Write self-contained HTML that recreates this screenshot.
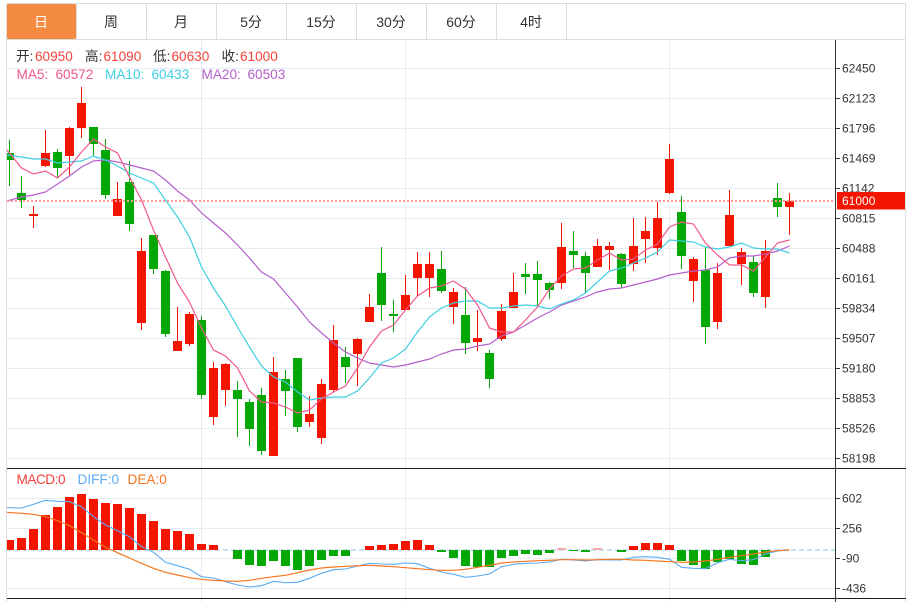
<!DOCTYPE html>
<html>
<head>
<meta charset="utf-8">
<style>
html,body{margin:0;padding:0;background:#fff;width:910px;height:602px;overflow:hidden}
svg{display:block}
text{font-family:"Liberation Sans","Noto Sans CJK SC",sans-serif}
.tab{font-size:14px;fill:#333;text-anchor:middle}
.ax{font-size:12px;fill:#333}
.lg{font-size:13.6px}
</style>
</head>
<body>
<svg width="910" height="602" viewBox="0 0 910 602" xmlns="http://www.w3.org/2000/svg">
<defs><clipPath id="c"><rect x="7" y="40" width="828" height="562"/></clipPath></defs>
<rect width="910" height="602" fill="#fff"/>

<!-- frame & tabs -->
<path d="M6 3.5H906M6.5 3V602M905.5 3V602M7 39.5H905M76.5 4V39M146.5 4V39M216.5 4V39M286.5 4V39M356.5 4V39M426.5 4V39M496.5 4V39M566.5 4V39" stroke="#dcdcdc" fill="none"/>
<rect x="7" y="4" width="69" height="35" rx="1.5" fill="#f48b40"/>
<text class="tab" x="41" y="27" style="fill:#fff">日</text>
<text class="tab" x="111" y="27">周</text>
<text class="tab" x="181" y="27">月</text>
<text class="tab" x="251" y="27">5分</text>
<text class="tab" x="321" y="27">15分</text>
<text class="tab" x="391" y="27">30分</text>
<text class="tab" x="461" y="27">60分</text>
<text class="tab" x="531" y="27">4时</text>

<!-- grid -->
<path d="M7 68.5H835M7 98.5H835M7 128.5H835M7 158.5H835M7 188.5H835M7 218.5H835M7 248.5H835M7 278.5H835M7 308.5H835M7 338.5H835M7 368.5H835M7 398.5H835M7 428.5H835M7 458.5H835M7 498.5H835M7 528.5H835M7 558.5H835M7 588.5H835M201.5 40V602M405.5 40V602M669.5 40V602" stroke="#e4edf3" fill="none"/>

<g clip-path="url(#c)">
<!-- zero line -->
<path d="M7 550H835" stroke="#b4dcec" stroke-width="1.5" stroke-dasharray="5 3" fill="none"/>

<g shape-rendering="crispEdges">
<!-- red candles -->
<path fill="none" stroke="#f41400" d="M33.5 206V228M45.5 130V167M69.5 127V175M81.5 87V138M117.5 182V216M141.5 238V330M177.5 307V351M189.5 312V346M213.5 362V425M225.5 363V406M273.5 357V456M309.5 396V427M321.5 379V444M333.5 325V392M357.5 338V386M369.5 294V322M405.5 275V310M417.5 252V296M429.5 252V297M453.5 288V324M477.5 310V351M501.5 304V341M513.5 273V308M561.5 223V289M597.5 239V267M609.5 242V270M633.5 218V271M645.5 217V263M657.5 202V255M669.5 144V194M693.5 257V302M717.5 263V329M729.5 190V246M741.5 248V285M765.5 240V308M789.5 193V235"/>
<path fill="#f41400" d="M29 214h9v2h-9zM41 153h9v13h-9zM65 128h9v28h-9zM77 103h9v25h-9zM113 199h9v17h-9zM137 251h9v72h-9zM173 341h9v10h-9zM185 314h9v30h-9zM209 368h9v49h-9zM221 364h9v26h-9zM269 372h9v84h-9zM305 414h9v8h-9zM317 384h9v54h-9zM329 340h9v50h-9zM353 339h9v15h-9zM365 307h9v15h-9zM401 295h9v15h-9zM413 264h9v14h-9zM425 264h9v14h-9zM449 292h9v15h-9zM473 338h9v4h-9zM497 311h9v28h-9zM509 292h9v16h-9zM557 247h9v36h-9zM593 246h9v21h-9zM605 246h9v4h-9zM629 246h9v18h-9zM641 231h9v8h-9zM653 218h9v30h-9zM665 159h9v34h-9zM689 259h9v22h-9zM713 273h9v49h-9zM725 215h9v31h-9zM737 252h9v12h-9zM761 251h9v46h-9zM785 201h9v6h-9z"/>
<!-- green candles -->
<path fill="none" stroke="#04a804" d="M9.5 140V186M21.5 176V208M57.5 149V177M93.5 127V156M105.5 139V199M129.5 161V231M153.5 235V274M165.5 270V337M201.5 316V399M237.5 381V437M249.5 399V446M261.5 388V455M285.5 370V416M297.5 358V432M345.5 347V383M381.5 247V321M393.5 300V332M441.5 251V293M465.5 287V354M489.5 350V388M525.5 263V294M537.5 261V307M549.5 282V299M573.5 231V268M585.5 252V293M621.5 253V288M681.5 196V269M705.5 247V344M753.5 256V297M777.5 183V217"/>
<path fill="#04a804" d="M5 153h9v7h-9zM17 193h9v7h-9zM53 152h9v16h-9zM89 127h9v17h-9zM101 150h9v45h-9zM125 182h9v42h-9zM149 235h9v34h-9zM161 271h9v63h-9zM197 320h9v75h-9zM233 390h9v9h-9zM245 402h9v27h-9zM257 395h9v56h-9zM281 379h9v12h-9zM293 358h9v69h-9zM341 357h9v10h-9zM377 273h9v32h-9zM389 314h9v2h-9zM437 269h9v22h-9zM461 315h9v28h-9zM485 353h9v26h-9zM521 274h9v3h-9zM533 274h9v6h-9zM545 283h9v7h-9zM569 251h9v4h-9zM581 256h9v17h-9zM617 254h9v30h-9zM677 212h9v44h-9zM701 270h9v57h-9zM749 262h9v31h-9zM773 198h9v9h-9z"/>

<!-- MACD red bars -->
<path fill="#f41400" d="M5 540h9v10h-9zM17 538h9v12h-9zM29 529h9v21h-9zM41 515h9v35h-9zM53 507h9v43h-9zM65 497h9v53h-9zM77 494h9v56h-9zM89 499h9v51h-9zM101 503h9v47h-9zM113 504h9v46h-9zM125 508h9v42h-9zM137 514h9v36h-9zM149 521h9v29h-9zM161 529h9v21h-9zM173 531h9v19h-9zM185 534h9v16h-9zM197 544h9v6h-9zM209 545h9v5h-9zM365 546h9v4h-9zM377 545h9v5h-9zM389 544h9v6h-9zM401 541h9v9h-9zM413 540h9v10h-9zM425 545h9v5h-9zM629 546h9v4h-9zM641 543h9v7h-9zM653 543h9v7h-9zM665 545h9v5h-9z"/>
<!-- MACD green bars -->
<path fill="#04a804" d="M233 550h9v9h-9zM245 550h9v15h-9zM257 550h9v16h-9zM269 550h9v11h-9zM281 550h9v16h-9zM293 550h9v20h-9zM305 550h9v16h-9zM317 550h9v10h-9zM329 550h9v6h-9zM341 550h9v6h-9zM437 550h9v2h-9zM449 550h9v8h-9zM461 550h9v16h-9zM473 550h9v17h-9zM485 550h9v17h-9zM497 550h9v8h-9zM509 550h9v6h-9zM521 550h9v4h-9zM533 550h9v5h-9zM545 550h9v3h-9zM569 550h9v1h-9zM581 550h9v2h-9zM617 550h9v2h-9zM677 550h9v11h-9zM689 550h9v15h-9zM701 550h9v19h-9zM713 550h9v12h-9zM725 550h9v9h-9zM737 550h9v14h-9zM749 550h9v15h-9zM761 550h9v7h-9z"/>
<path fill="#f8a8a8" d="M557 548h9v2h-9zM593 548h9v2h-9z"/>
</g>

<!-- MA lines -->
<polyline fill="none" stroke="#b45fcb" stroke-width="1.2" points="7,201 21.5,197 33.5,195 45.5,192 57.5,184 69.5,176 81.5,167 93.5,161 105.5,160 117.5,162 129.5,165 141.5,168 153.5,171 165.5,180 177.5,191 189.5,200 201.5,213 213.5,223 225.5,233 237.5,245 249.5,258 261.5,272 273.5,279 285.5,293 297.5,307 309.5,322 321.5,333 333.5,343 345.5,352 357.5,358 369.5,363 381.5,365 393.5,367 405.5,365 417.5,362 429.5,359 441.5,354 453.5,350 465.5,349 477.5,346 489.5,344 501.5,336 513.5,332 525.5,325 537.5,318 549.5,312 561.5,305 573.5,301 585.5,297 597.5,292 609.5,289 621.5,288 633.5,285 645.5,282 657.5,279 669.5,275 681.5,273 693.5,271 705.5,270 717.5,267 729.5,258 741.5,256 753.5,256 765.5,254 777.5,251 789.5,246"/>
<polyline fill="none" stroke="#3fcfe2" stroke-width="1.2" points="7,155 21.5,157 33.5,159 45.5,159 57.5,163 69.5,162 81.5,161 93.5,156 105.5,160 117.5,166 129.5,173 141.5,178 153.5,183 165.5,200 177.5,217 189.5,237 201.5,267 213.5,288 225.5,306 237.5,327 249.5,347 261.5,366 273.5,377 285.5,382 297.5,392 309.5,400 321.5,398 333.5,397 345.5,397 357.5,391 369.5,378 381.5,363 393.5,358 405.5,349 417.5,332 429.5,317 441.5,308 453.5,303 465.5,301 477.5,301 489.5,308 501.5,308 513.5,306 525.5,305 537.5,306 549.5,309 561.5,304 573.5,300 585.5,293 597.5,282 609.5,271 621.5,268 633.5,263 645.5,258 657.5,252 669.5,240 681.5,241 693.5,242 705.5,247 717.5,249 729.5,247 741.5,243 753.5,248 765.5,249 777.5,249 789.5,253"/>
<polyline fill="none" stroke="#f0588c" stroke-width="1.2" points="7,150 21.5,168 33.5,174 45.5,171 57.5,178 69.5,167 81.5,152 93.5,139 105.5,147 117.5,153 129.5,177 141.5,200 153.5,230 165.5,257 177.5,283 189.5,302 201.5,328 213.5,350 225.5,356 237.5,368 249.5,391 261.5,402 273.5,403 285.5,407 297.5,413 309.5,410 321.5,399 333.5,392 345.5,386 357.5,368 369.5,347 381.5,331 393.5,325 405.5,310 417.5,296 429.5,288 441.5,286 453.5,281 465.5,289 477.5,305 489.5,328 501.5,332 513.5,332 525.5,320 537.5,307 549.5,289 561.5,276 573.5,269 585.5,268 597.5,260 609.5,253 621.5,260 633.5,259 645.5,250 657.5,244 669.5,227 681.5,222 693.5,224 705.5,243 717.5,255 729.5,265 741.5,265 753.5,271 765.5,257 777.5,243 789.5,240"/>

<!-- MACD lines -->
<polyline fill="none" stroke="#5cacf2" stroke-width="1.1" points="7,507.7 21.5,508 33.5,504.3 45.5,500.3 57.5,501.3 69.5,501.7 81.5,506.7 93.5,516.7 105.5,525 117.5,530.7 129.5,536.7 141.5,546.7 153.5,552.3 165.5,562.3 177.5,565.7 189.5,569.3 201.5,576.7 213.5,578 225.5,581.7 237.5,585 249.5,587 261.5,585.7 273.5,581.3 285.5,582.7 297.5,582.3 309.5,578.3 321.5,573.3 333.5,569.7 345.5,569 357.5,566 369.5,563.3 381.5,564 393.5,564.3 405.5,563 417.5,563.7 429.5,568.3 441.5,572 453.5,574.3 465.5,577.3 477.5,576 489.5,574 501.5,566.7 513.5,564.3 525.5,563.3 537.5,563 549.5,562 561.5,559.3 573.5,560 585.5,561 597.5,559.7 609.5,560 621.5,560 633.5,557.3 645.5,556.7 657.5,557.3 669.5,559.3 681.5,567.3 693.5,568.3 705.5,568.7 717.5,562.7 729.5,559.3 741.5,560.7 753.5,559.7 765.5,554 777.5,551 789.5,550"/>
<polyline fill="none" stroke="#f7761f" stroke-width="1.2" points="7,512.3 21.5,513.3 33.5,514.3 45.5,516.7 57.5,520.7 69.5,525.7 81.5,532.7 93.5,540 105.5,547.3 117.5,552.7 129.5,558 141.5,563.3 153.5,568.3 165.5,572.3 177.5,575 189.5,577.7 201.5,579.3 213.5,580.3 225.5,581 237.5,581.3 249.5,580.3 261.5,578.3 273.5,576.7 285.5,575.3 297.5,572.7 309.5,570 321.5,568 333.5,567 345.5,566.3 357.5,565.7 369.5,565.3 381.5,566 393.5,566.7 405.5,567.7 417.5,568.7 429.5,569.7 441.5,570.3 453.5,570.3 465.5,569.3 477.5,567.3 489.5,565.3 501.5,563 513.5,562 525.5,561.3 537.5,560.7 549.5,560.3 561.5,559.7 573.5,559.7 585.5,560 597.5,559.7 609.5,559.3 621.5,559.3 633.5,560 645.5,560.3 657.5,561 669.5,561.7 681.5,562.3 693.5,562 705.5,561 717.5,559.3 729.5,557.3 741.5,555.7 753.5,554 765.5,552 777.5,550.7 789.5,550"/>

<!-- current price line -->
<path d="M7 201H835" stroke="#f99" stroke-width="2" stroke-dasharray="2 2" fill="none"/>
</g>

<!-- panel separators & axis -->
<path d="M7 468.5H906M7 598.5H906" stroke="#1c1c1c" fill="none"/>
<path d="M835.5 40V602" stroke="#333" fill="none"/>
<path d="M836 68.5H840M836 98.5H840M836 128.5H840M836 158.5H840M836 188.5H840M836 218.5H840M836 248.5H840M836 278.5H840M836 308.5H840M836 338.5H840M836 368.5H840M836 398.5H840M836 428.5H840M836 458.5H840M836 498.5H840M836 528.5H840M836 558.5H840M836 588.5H840" stroke="#333" fill="none"/>

<!-- axis labels -->
<text class="ax" x="842" y="72.5">62450</text>
<text class="ax" x="842" y="102.5">62123</text>
<text class="ax" x="842" y="132.5">61796</text>
<text class="ax" x="842" y="162.5">61469</text>
<text class="ax" x="842" y="192.5">61142</text>
<text class="ax" x="842" y="222.5">60815</text>
<text class="ax" x="842" y="252.5">60488</text>
<text class="ax" x="842" y="282.5">60161</text>
<text class="ax" x="842" y="312.5">59834</text>
<text class="ax" x="842" y="342.5">59507</text>
<text class="ax" x="842" y="372.5">59180</text>
<text class="ax" x="842" y="402.5">58853</text>
<text class="ax" x="842" y="432.5">58526</text>
<text class="ax" x="842" y="462.5">58198</text>
<text class="ax" x="842" y="502.5">602</text>
<text class="ax" x="842" y="532.5">256</text>
<text class="ax" x="842" y="562.5">-90</text>
<text class="ax" x="842" y="592.5">-436</text>
<rect x="837" y="192" width="68" height="17.5" fill="#f41400"/>
<text class="ax" x="842" y="205" style="fill:#fff">61000</text>

<!-- legends -->
<text class="lg" x="16" y="61" fill="#333">开:</text><text class="lg" x="35" y="61" fill="#f5413c">60950</text>
<text class="lg" x="85" y="61" fill="#333">高:</text><text class="lg" x="103.5" y="61" fill="#f5413c">61090</text>
<text class="lg" x="153" y="61" fill="#333">低:</text><text class="lg" x="171.5" y="61" fill="#f5413c">60630</text>
<text class="lg" x="221.5" y="61" fill="#333">收:</text><text class="lg" x="240" y="61" fill="#f5413c">61000</text>
<text class="lg" x="16.5" y="79" fill="#f0588c">MA5:</text><text class="lg" x="55.5" y="79" fill="#f0588c">60572</text>
<text class="lg" x="105" y="79" fill="#3fcfe2">MA10:</text><text class="lg" x="151.5" y="79" fill="#3fcfe2">60433</text>
<text class="lg" x="201.5" y="79" fill="#b45fcb">MA20:</text><text class="lg" x="247.5" y="79" fill="#b45fcb">60503</text>
<text class="lg" x="16.5" y="484" fill="#f5413c" textLength="49">MACD:0</text>
<text class="lg" x="77.5" y="484" fill="#5cacf2">DIFF:0</text>
<text class="lg" x="127.5" y="484" fill="#f7761f">DEA:0</text>
</svg>
</body>
</html>
